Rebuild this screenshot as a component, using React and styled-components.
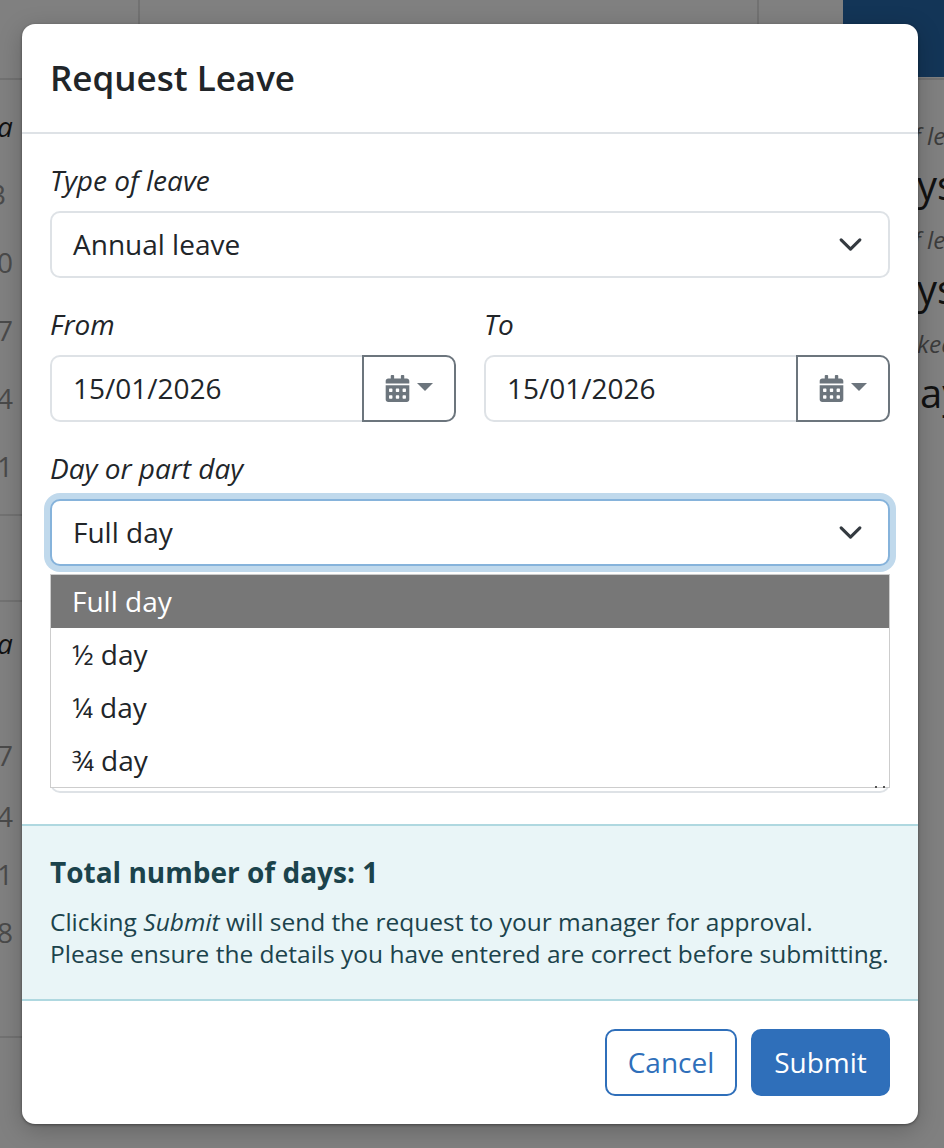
import React from "react";
import styled, { createGlobalStyle } from "styled-components";
import { FaCalendarAlt } from "react-icons/fa";

const GlobalStyle = createGlobalStyle`
    html, body {
        margin: 0;
        padding: 0;
        background: #808080;
    }

    * {
        box-sizing: border-box;
    }
`;

const leftRows = [
    { text: "a", italic: true },
    { text: "3", offset: -10 },
    { text: "0" },
    { text: "7" },
    { text: "4" },
    { text: "1" },
];

const leftRowsLower = [
    { text: "a", italic: true },
    { text: "", height: 44 },
    { text: "7", height: 61 },
    { text: "4", height: 58 },
    { text: "1", height: 58 },
    { text: "8", height: 58 },
];

const Chevron = () => (
    <St.Chevron viewBox="0 0 16 16" fill="none">
        <path d="m2 5 6 6 6-6" stroke="#343a40" strokeWidth="2" strokeLinecap="round" strokeLinejoin="round" />
    </St.Chevron>
);

const DateField = ({ label, value }) => (
    <St.DateColumn>
        <St.Label>{label}</St.Label>
        <St.DateGroup>
            <St.DateInput>{value}</St.DateInput>
            <St.CalendarButton>
                <FaCalendarAlt />
                <St.Caret />
            </St.CalendarButton>
        </St.DateGroup>
    </St.DateColumn>
);

const App = () => {
    return (
        <St.Page>
            <GlobalStyle />
            <St.TopBar>
                <St.TopCell $width={140} />
                <St.TopCell $width={619} />
                <St.TopSpacer />
                <St.BlueBlock />
            </St.TopBar>
            <St.Columns>
                <St.LeftColumn>
                    <St.LeftGroup>
                        {leftRows.map((row, i) => (
                            <St.LeftRow key={i} $italic={row.italic} $offset={row.offset}>{row.text}</St.LeftRow>
                        ))}
                    </St.LeftGroup>
                    <St.LeftBand />
                    <St.LeftGroupLower>
                        {leftRowsLower.map((row, i) => (
                            <St.LeftRow key={i} $italic={row.italic} $height={row.height}>{row.text}</St.LeftRow>
                        ))}
                    </St.LeftGroupLower>
                </St.LeftColumn>
                <St.RightColumn>
                    <St.SmallNote>f leave</St.SmallNote>
                    <St.BigValue>ys</St.BigValue>
                    <St.SmallNote>f leave</St.SmallNote>
                    <St.BigValue>ys</St.BigValue>
                    <St.SmallNote $shift={3}>ked</St.SmallNote>
                    <St.BigValue $shift={6}>ay</St.BigValue>
                </St.RightColumn>
            </St.Columns>

            <St.Dialog>
                <St.Header>
                    <St.Title>Request Leave</St.Title>
                </St.Header>
                <St.Body>
                    <St.Label>Type of leave</St.Label>
                    <St.Select>
                        Annual leave
                        <Chevron />
                    </St.Select>

                    <St.DateRow>
                        <DateField label="From" value="15/01/2026" />
                        <DateField label="To" value="15/01/2026" />
                    </St.DateRow>

                    <St.Label>Day or part day</St.Label>
                    <St.DropdownWrap>
                        <St.Select $focused>
                            Full day
                            <Chevron />
                        </St.Select>
                        <St.Menu>
                            <St.Option $selected>Full day</St.Option>
                            <St.Option>½ day</St.Option>
                            <St.Option>¼ day</St.Option>
                            <St.Option>¾ day</St.Option>
                        </St.Menu>
                    </St.DropdownWrap>

                    <St.NotesBox>
                        <St.ResizeDots />
                    </St.NotesBox>
                </St.Body>

                <St.Info>
                    <St.InfoTitle>Total number of days: 1</St.InfoTitle>
                    <St.InfoText>
                        Clicking <em>Submit</em> will send the request to your manager for approval.
                        <br />
                        Please ensure the details you have entered are correct before submitting.
                    </St.InfoText>
                </St.Info>

                <St.Footer>
                    <St.CancelButton>Cancel</St.CancelButton>
                    <St.SubmitButton>Submit</St.SubmitButton>
                </St.Footer>
            </St.Dialog>
        </St.Page>
    );
};

export default App;

const St = {
    Page: styled.div`
        position: relative;
        width: 944px;
        height: 1148px;
        overflow: hidden;
        background: #808080;
        font-family: "Open Sans", "Liberation Sans", sans-serif;
    `,

    TopBar: styled.div`
        display: flex;
        height: 80px;
        border-bottom: 2px solid #727272;
    `,

    TopCell: styled.div`
        flex: 0 0 ${(props) => props.$width}px;
        border-right: 2px solid #727272;
    `,

    TopSpacer: styled.div`
        flex: 0 0 84px;
    `,

    BlueBlock: styled.div`
        flex: 1;
        height: 77px;
        background: #133557;
    `,

    Columns: styled.div`
        display: flex;
        justify-content: space-between;
    `,

    LeftColumn: styled.div`
        width: 22px;
        overflow: hidden;
    `,

    LeftGroup: styled.div`
        height: 436px;
        padding-top: 12px;
        border-bottom: 2px solid #727272;
    `,

    LeftBand: styled.div`
        height: 86px;
        border-bottom: 2px solid #727272;
    `,

    LeftGroupLower: styled.div`
        height: 436px;
        padding-top: 7px;
        border-bottom: 2px solid #727272;
    `,

    LeftRow: styled.div`
        height: ${(props) => props.$height || 68}px;
        margin-left: ${(props) => props.$offset || -3}px;
        font-size: 28px;
        line-height: 68px;
        font-style: ${(props) => (props.$italic ? "italic" : "normal")};
        color: ${(props) => (props.$italic ? "#111" : "#4a4a4a")};
    `,

    RightColumn: styled.div`
        width: 30px;
        padding-top: 38px;
        white-space: nowrap;
        overflow: hidden;
    `,

    SmallNote: styled.div`
        height: 36px;
        margin-left: ${(props) => props.$shift || -1}px;
        font-size: 24.5px;
        font-style: italic;
        line-height: 36px;
        color: #3c3c3c;
    `,

    BigValue: styled.div`
        height: 68px;
        margin-left: ${(props) => props.$shift || 3}px;
        font-size: 40px;
        line-height: 62px;
        color: #111;
    `,

    Dialog: styled.div`
        position: absolute;
        top: 24px;
        left: 22px;
        width: 896px;
        height: 1100px;
        display: flex;
        flex-direction: column;
        background: #fff;
        border-radius: 13px;
        box-shadow: 0 6px 24px rgba(0, 0, 0, 0.22), 0 1px 3px rgba(0, 0, 0, 0.4);
        color: #212529;
    `,

    Header: styled.div`
        flex: 0 0 110px;
        padding: 32px 28px 0 28px;
        border-bottom: 2px solid #dee2e6;
    `,

    Title: styled.h5`
        margin: 0;
        font-size: 35px;
        font-weight: 600;
        line-height: 44px;
    `,

    Body: styled.div`
        flex: 0 0 690px;
        padding: 27px 28px 0;
    `,

    Label: styled.div`
        height: 50px;
        font-size: 28px;
        font-style: italic;
        line-height: 38px;
    `,

    Select: styled.div`
        display: flex;
        align-items: center;
        justify-content: space-between;
        height: 67px;
        padding: 0 25px 2px 21px;
        font-size: 28px;
        background: #fff;
        border: 2px solid ${(props) => (props.$focused ? "#86b3db" : "#dee2e6")};
        border-radius: 10px;
        box-shadow: ${(props) => (props.$focused ? "0 0 0 6px #c0d9ec" : "none")};
    `,

    Chevron: styled.svg`
        flex: none;
        width: 25px;
        height: 25px;
        margin-bottom: -2px;
    `,

    DateRow: styled.div`
        display: grid;
        grid-template-columns: 406px 406px;
        gap: 28px;
        margin-top: 27px;
        margin-bottom: 27px;
    `,

    DateColumn: styled.div`
        display: flex;
        flex-direction: column;
    `,

    DateGroup: styled.div`
        display: flex;
        height: 67px;
    `,

    DateInput: styled.div`
        flex: 1;
        display: flex;
        align-items: center;
        padding: 0 0 2px 21px;
        font-size: 28px;
        border: 2px solid #dee2e6;
        border-right: 0;
        border-radius: 10px 0 0 10px;
    `,

    CalendarButton: styled.div`
        flex: 0 0 94px;
        display: flex;
        align-items: center;
        justify-content: center;
        gap: 6px;
        padding-right: 2px;
        color: #6c757d;
        font-size: 27px;
        border: 2px solid #6c757d;
        border-radius: 0 10px 10px 0;
    `,

    Caret: styled.span`
        width: 0;
        height: 0;
        margin-bottom: 4px;
        border-top: 8px solid #6c757d;
        border-left: 8px solid transparent;
        border-right: 8px solid transparent;
    `,

    DropdownWrap: styled.div`
        position: relative;
    `,

    Menu: styled.div`
        position: absolute;
        top: 75px;
        left: 0;
        right: 0;
        z-index: 2;
        height: 214px;
        background: #fff;
        border: 1px solid #cdcdcd;
    `,

    Option: styled.div`
        height: 53px;
        padding-left: 21px;
        font-size: 28px;
        line-height: 53px;
        color: ${(props) => (props.$selected ? "#fff" : "#212529")};
        background: ${(props) => (props.$selected ? "#777" : "transparent")};
    `,

    NotesBox: styled.div`
        position: relative;
        height: 170px;
        margin-top: 57px;
        border: 2px solid #dee2e6;
        border-radius: 10px;
    `,

    ResizeDots: styled.span`
        position: absolute;
        right: 3px;
        bottom: 3px;
        width: 10px;
        height: 2px;
        border-left: 2px solid #555;
        border-right: 2px solid #555;
        z-index: 3;
    `,

    Info: styled.div`
        flex: 0 0 177px;
        padding: 28px 28px 0;
        color: #1b434c;
        background: #e9f5f7;
        border-top: 2px solid #afd8e0;
        border-bottom: 2px solid #afd8e0;
    `,

    InfoTitle: styled.div`
        font-size: 28px;
        font-weight: 700;
        line-height: 36px;
    `,

    InfoText: styled.p`
        margin: 16px 0 0;
        font-size: 24.5px;
        line-height: 32px;
    `,

    Footer: styled.div`
        flex: 1;
        display: flex;
        justify-content: flex-end;
        gap: 14px;
        padding: 28px 28px 0 0;
    `,

    CancelButton: styled.button`
        width: 132px;
        height: 67px;
        padding: 0 0 2px;
        font-family: inherit;
        font-size: 28px;
        color: #2f6fba;
        background: #fff;
        border: 2px solid #2f6fba;
        border-radius: 10px;
    `,

    SubmitButton: styled.button`
        width: 139px;
        height: 67px;
        padding: 0 0 2px;
        font-family: inherit;
        font-size: 28px;
        color: #fff;
        background: #2f6fba;
        border: 2px solid #2f6fba;
        border-radius: 10px;
    `,
};
